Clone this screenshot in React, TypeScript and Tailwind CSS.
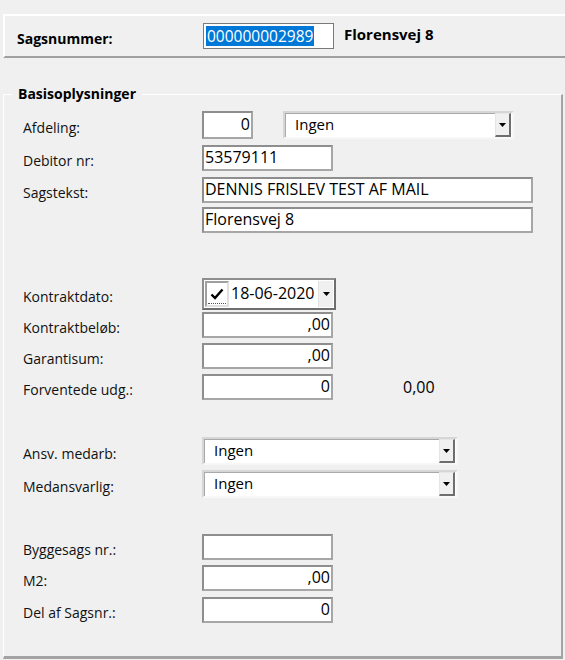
import React from 'react';

const font = { fontFamily: '"Open Sans", "Noto Sans", sans-serif' };

const boxCls =
  'bg-white border-2 border-t-[#8e8e8e] border-l-[#8e8e8e] border-r-[#a6a6a6] border-b-[#a6a6a6] flex items-center text-[16px] text-black';

const Arrow = () => (
  <svg width="7" height="4" viewBox="0 0 7 4">
    <path d="M0 0h7L3.5 4z" fill="#000" />
  </svg>
);

const Box = ({
  w,
  h = 26,
  right,
  children,
}: {
  w: number;
  h?: number;
  right?: boolean;
  children?: React.ReactNode;
}) => (
  <div
    className={`${boxCls} ${right ? 'justify-end pr-[1px]' : 'pl-[1px]'}`}
    style={{ width: w, height: h }}
  >
    <span className="-mt-[2px]">{children}</span>
  </div>
);

const Combo = ({ w, text }: { w: number; text: string }) => (
  <div
    className="bg-white flex items-stretch border-t-2 border-l-2 border-t-[#d6d6d6] border-l-[#d6d6d6] border-r-2 border-b-2 border-r-[#f7f7f7] border-b-[#f7f7f7] h-[28px] text-[15px] text-black"
    style={{ width: w }}
  >
    <div className="flex-1 flex items-center pl-[9px] pb-[3px] border-t border-l border-[#a9a9a9]">{text}</div>
    <div className="w-[16px] flex items-center justify-center bg-[#f0f0f0] border-l border-t border-[#e6e6e6] border-r-2 border-b-2 border-r-[#6e6e6e] border-b-[#6e6e6e] mr-[1px]">
      <Arrow />
    </div>
  </div>
);

const Label = ({ children }: { children: React.ReactNode }) => (
  <div className="w-[201px] pl-[22px] pt-[4px] text-[14px] text-[#111]">{children}</div>
);

const Row = ({
  label,
  mt,
  children,
}: {
  label?: string;
  mt: number;
  children: React.ReactNode;
}) => (
  <div className="flex items-center" style={{ marginTop: mt }}>
    <Label>{label}</Label>
    {children}
  </div>
);

export default function App() {
  return (
    <div className="w-[565px] h-[660px] bg-[#f0f0f0] overflow-hidden relative" style={font}>
      <div className="h-[14px]" />
      {/* Top panel */}
      <div className="ml-[3px] h-[44px] border-t-2 border-l-2 border-white border-b-2 border-b-[#a0a0a0] flex items-center">
        <div className="w-[198px] pl-[12px] pt-[4px] font-bold text-[14px] text-black">Sagsnummer:</div>
        <div className="w-[131px] h-[26px] bg-white border border-[#7a7a7a] flex items-center pl-[2px]">
          <span className="bg-[#0078d7] text-white text-[15.5px] leading-[20px] px-[1px]">000000002989</span>
        </div>
        <div className="ml-[10px] font-bold text-[15px] text-black -mt-[4px]">Florensvej 8</div>
      </div>

      {/* Group box */}
      <div className="relative mt-[36px] ml-[3px] w-[560px] h-[565px] border-t border-l border-white border-r-2 border-b-[3px] border-r-[#a3a3a3] border-b-[#a3a3a3]">
        <div className="absolute -top-[11px] left-[8px] bg-[#f0f0f0] px-[6px] font-bold text-[14px] text-black leading-[20px]">
          Basisoplysninger
        </div>
        <div className="-ml-[3px] pt-[14px]">
          <Row label="Afdeling:" mt={2}>
            <Box w={51} h={28} right>0</Box>
            <div className="ml-[30px]">
              <Combo w={231} text="Ingen" />
            </div>
          </Row>
          <Row label="Debitor nr:" mt={6}>
            <Box w={131}>53579111</Box>
          </Row>
          <Row label="Sagstekst:" mt={6}>
            <Box w={331}>DENNIS FRISLEV TEST AF MAIL</Box>
          </Row>
          <Row mt={4}>
            <Box w={331}>Florensvej 8</Box>
          </Row>

          <Row label="Kontraktdato:" mt={45}>
            <div className="w-[134px] h-[32px] bg-white border-2 border-t-[#8e8e8e] border-l-[#8e8e8e] border-r-[#6e6e6e] border-b-[#6e6e6e] flex items-center">
              <div className="ml-[1px] w-[24px] h-[26px] border-2 border-t-[#a0a0a0] border-l-[#a0a0a0] border-r-[#e0e0e0] border-b-[#e0e0e0] flex items-center justify-center relative">
                <svg width="14" height="12" viewBox="0 0 14 12">
                  <path d="M1.5 6.5 L5 10 L12.5 1.5" stroke="#000" strokeWidth="2.4" fill="none" />
                </svg>
                <div className="absolute left-[1px] right-[1px] bottom-[1px] border-b border-dotted border-[#555]" />
              </div>
              <div className="ml-[2px] flex-1 text-[16px] text-black pb-[3px]">18-06-2020</div>
              <div className="w-[15px] h-[26px] mr-[1px] bg-[#f0f0f0] flex items-center justify-center border-l border-[#e0e0e0]">
                <Arrow />
              </div>
            </div>
          </Row>
          <Row label="Kontraktbeløb:" mt={2}>
            <Box w={131} right>,00</Box>
          </Row>
          <Row label="Garantisum:" mt={5}>
            <Box w={131} right>,00</Box>
          </Row>
          <Row label="Forventede udg.:" mt={5}>
            <Box w={131} right>0</Box>
            <div className="ml-[70px] text-[16px] text-black">0,00</div>
          </Row>

          <Row label="Ansv. medarb:" mt={37}>
            <Combo w={256} text="Ingen" />
          </Row>
          <Row label="Medansvarlig:" mt={5}>
            <Combo w={256} text="Ingen" />
          </Row>

          <Row label="Byggesags nr.:" mt={36}>
            <Box w={131} />
          </Row>
          <Row label="M2:" mt={5}>
            <Box w={131} right>,00</Box>
          </Row>
          <Row label="Del af Sagsnr.:" mt={6}>
            <Box w={131} right>0</Box>
          </Row>
        </div>
      </div>
    </div>
  );
}
